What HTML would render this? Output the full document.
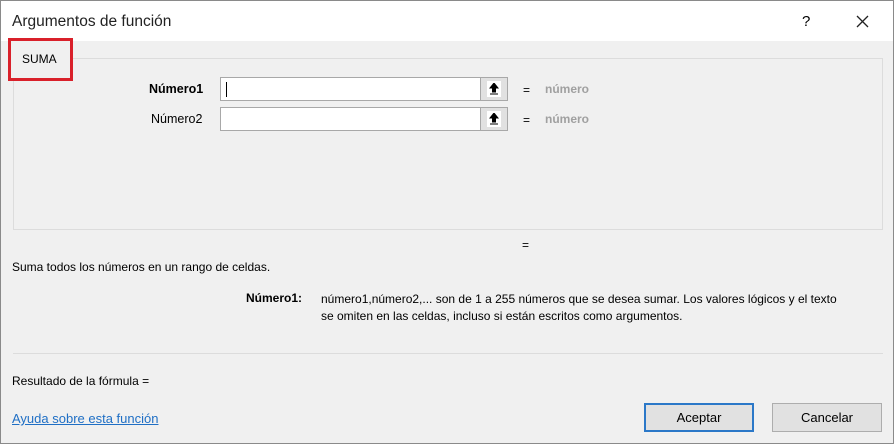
<!DOCTYPE html><html><head><style>
body{margin:0;width:894px;height:444px;overflow:hidden;font-family:"Liberation Sans",sans-serif;font-size:12px;color:#000}
.w{position:absolute;left:0;top:0;width:892px;height:442px;border:1px solid #8a8a8a;background:#f0f0f0}
.t{position:absolute;left:0;top:0;width:892px;height:40px;background:#fff}
.a{position:absolute;white-space:nowrap}
.in{position:absolute;left:219px;width:259px;height:22px;border:1px solid #a8a8a8;background:#fff}
.bt{position:absolute;left:479px;width:26px;height:22px;border:1px solid #a8a8a8;background:#e1e1e1}
.bt i{position:absolute;left:6px;top:3px;width:14px;height:16px;background:#fff}
.b{position:absolute;top:402px;width:108px;height:27px;border:1px solid #adadad;background:#e1e1e1;text-align:center;line-height:27px;font-size:13px}
</style></head><body><div class="w">
<div class="t"></div>
<div class="a" style="left:11px;top:12px;font-size:15.5px;color:#222">Argumentos de función</div>
<div class="a" style="left:801px;top:12px;font-size:15px">?</div>
<svg class="a" style="left:855px;top:14px" width="13" height="13"><path d="M1 1L12 12M12 1L1 12" stroke="#222" stroke-width="1.3"/></svg>
<div class="a" style="left:12px;top:57px;width:868px;height:170px;border:1px solid #dcdcdc"></div>
<div class="a" style="left:7px;top:37px;width:59px;height:37px;border:3px solid #d9202a;background:#f0f0f0"></div>
<div class="a" style="left:21px;top:51px;font-size:12px">SUMA</div>
<div class="a" style="left:148px;top:81px;font-weight:bold;font-size:12.5px">Número1</div>
<div class="a" style="left:150px;top:111px;font-size:12.5px">Número2</div>
<div class="in" style="top:76px"><div style="position:absolute;left:5px;top:4px;width:1px;height:15px;background:#000"></div></div>
<div class="in" style="top:106px"></div>
<div class="bt" style="top:76px"><i></i><svg class="a" style="left:8px;top:5px" width="10" height="13"><path d="M5 0L9 5H6.5V9H3.5V5H1Z M1 11H9" stroke="#000" fill="#000" stroke-width="1"/></svg></div>
<div class="bt" style="top:106px"><i></i><svg class="a" style="left:8px;top:5px" width="10" height="13"><path d="M5 0L9 5H6.5V9H3.5V5H1Z M1 11H9" stroke="#000" fill="#000" stroke-width="1"/></svg></div>
<div class="a" style="left:522px;top:82px">=</div><div class="a" style="left:544px;top:81px;color:#a0a0a0;font-weight:bold">número</div>
<div class="a" style="left:522px;top:112px">=</div><div class="a" style="left:544px;top:111px;color:#a0a0a0;font-weight:bold">número</div>
<div class="a" style="left:521px;top:237px">=</div>
<div class="a" style="left:11px;top:259px">Suma todos los números en un rango de celdas.</div>
<div class="a" style="left:245px;top:290px;font-weight:bold">Número1:</div>
<div class="a" style="left:320px;top:290px;line-height:17px">número1,número2,... son de 1 a 255 números que se desea sumar. Los valores lógicos y el texto<br>se omiten en las celdas, incluso si están escritos como argumentos.</div>
<div class="a" style="left:12px;top:352px;width:870px;height:1px;background:#dcdcdc"></div>
<div class="a" style="left:11px;top:373px">Resultado de la fórmula =</div>
<div class="a" style="left:11px;top:410px;color:#1f6fc5;text-decoration:underline;font-size:13px">Ayuda sobre esta función</div>
<div class="b" style="left:643px;border:2px solid #2b78c8;width:106px;height:25px;line-height:25px">Aceptar</div>
<div class="b" style="left:771px">Cancelar</div>
</div></body></html>
